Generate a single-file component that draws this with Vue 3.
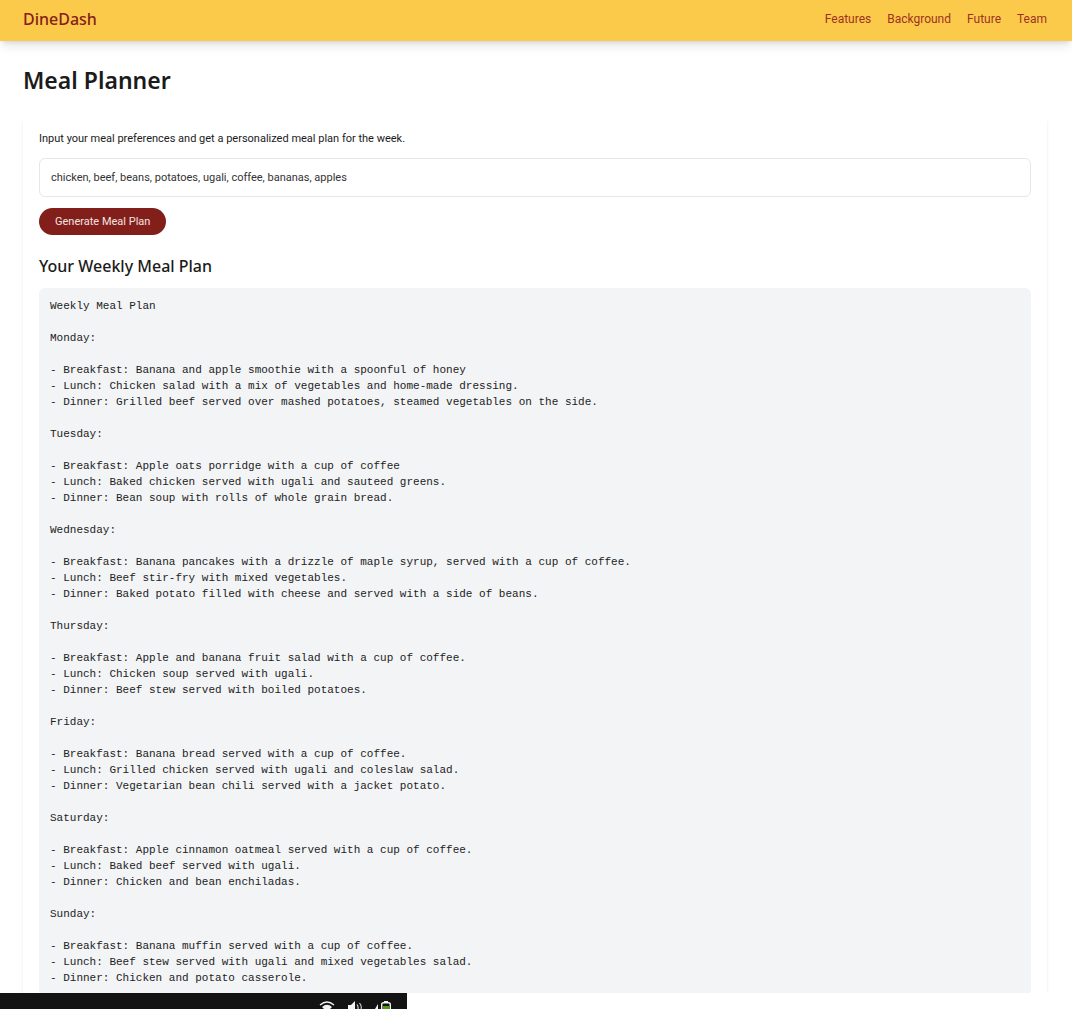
<script setup>
import { ref } from 'vue'

const links = ['Features', 'Background', 'Future', 'Team']
const preferences = ref('chicken, beef, beans, potatoes, ugali, coffee, bananas, apples')

const plan = `Weekly Meal Plan

Monday:

- Breakfast: Banana and apple smoothie with a spoonful of honey
- Lunch: Chicken salad with a mix of vegetables and home-made dressing.
- Dinner: Grilled beef served over mashed potatoes, steamed vegetables on the side.

Tuesday:

- Breakfast: Apple oats porridge with a cup of coffee
- Lunch: Baked chicken served with ugali and sauteed greens.
- Dinner: Bean soup with rolls of whole grain bread.

Wednesday:

- Breakfast: Banana pancakes with a drizzle of maple syrup, served with a cup of coffee.
- Lunch: Beef stir-fry with mixed vegetables.
- Dinner: Baked potato filled with cheese and served with a side of beans.

Thursday:

- Breakfast: Apple and banana fruit salad with a cup of coffee.
- Lunch: Chicken soup served with ugali.
- Dinner: Beef stew served with boiled potatoes.

Friday:

- Breakfast: Banana bread served with a cup of coffee.
- Lunch: Grilled chicken served with ugali and coleslaw salad.
- Dinner: Vegetarian bean chili served with a jacket potato.

Saturday:

- Breakfast: Apple cinnamon oatmeal served with a cup of coffee.
- Lunch: Baked beef served with ugali.
- Dinner: Chicken and bean enchiladas.

Sunday:

- Breakfast: Banana muffin served with a cup of coffee.
- Lunch: Beef stew served with ugali and mixed vegetables salad.
- Dinner: Chicken and potato casserole.
`
</script>

<template>
  <div class="screen">
    <header class="topbar">
      <a class="brand" href="#">DineDash</a>
      <nav class="links">
        <a v-for="link in links" :key="link" :href="'#' + link.toLowerCase()">{{ link }}</a>
      </nav>
    </header>

    <main class="page">
      <h1>Meal Planner</h1>
      <section class="card">
        <label class="hint" for="preferences">Input your meal preferences and get a personalized meal plan for the week.</label>
        <input id="preferences" v-model="preferences" class="field" type="text" />
        <button class="generate" type="button">Generate Meal Plan</button>
        <h2>Your Weekly Meal Plan</h2>
        <pre class="plan">{{ plan }}</pre>
      </section>
    </main>

    <footer class="tray-row">
      <div class="tray">
        <svg width="16" height="8" viewBox="0 0 16 8" aria-hidden="true">
          <path d="M1 4 Q8 -2 15 4" fill="none" stroke="#f2f2f2" stroke-width="1.3" />
          <path d="M3 6 Q8 1.5 13 6 L11 8 H5 Z" fill="#f2f2f2" />
        </svg>
        <svg width="16" height="8" viewBox="0 0 16 8" aria-hidden="true">
          <path d="M1 4 H4 L8 0 V8 H1 Z" fill="#f2f2f2" />
          <path d="M10 3.5 Q11.5 5.5 11 8 M12.5 2 Q15 5 14 8" fill="none" stroke="#dcdcdc" stroke-width="1.1" />
        </svg>
        <svg width="17" height="8" viewBox="0 0 17 8" aria-hidden="true">
          <path d="M3 3 V8 H0 Z" fill="#f2f2f2" />
          <path d="M6.7 8 V3.5 Q6.7 1.7 8.5 1.7 H13.5 Q15.3 1.7 15.3 3.5 V8" fill="none" stroke="#f2f2f2" stroke-width="1.4" />
          <rect x="9" y="0" width="4" height="2" fill="#f2f2f2" />
          <rect x="8" y="5" width="6" height="3" fill="#4e9a06" />
        </svg>
      </div>
    </footer>
  </div>
</template>

<style>
body {
  background: #fff;
}
</style>

<style scoped>
.screen {
  display: flex;
  flex-direction: column;
  height: 100vh;
  overflow: hidden;
  color: #1b1b1b;
  font-family: Roboto, sans-serif;
  font-size: 11px;
  line-height: 16px;
}

.topbar {
  display: flex;
  flex: none;
  align-items: center;
  justify-content: space-between;
  box-sizing: border-box;
  height: 41px;
  padding: 0 25px 3px 23px;
  background: #fcca4b;
  box-shadow: 0 7px 10px -2px rgba(0, 0, 0, 0.1), 0 3px 4px -2px rgba(0, 0, 0, 0.1);
}

.topbar a {
  text-decoration: none;
}

.brand,
h1,
h2 {
  font-family: "Noto Sans", sans-serif;
}

.brand {
  color: #85201b;
  font-size: 16px;
  font-weight: 500;
}

.links {
  display: flex;
  gap: 16px;
  font-size: 12px;
}

.links a {
  color: #9c3320;
}

.page {
  flex: 1;
  min-height: 0;
  overflow: hidden;
  padding: 0 25px 0 23px;
}

h1 {
  margin: 23px 0 20px;
  font-size: 23px;
  font-weight: 600;
  line-height: 32px;
}

.card {
  display: flex;
  flex-direction: column;
  align-items: flex-start;
  padding: 15px 16px 16px;
  border-radius: 5px;
  box-shadow: 0 3px 4px -1px rgba(0, 0, 0, 0.1), 0 1px 3px -1px rgba(0, 0, 0, 0.06);
}

.hint {
  margin-bottom: 11px;
}

.field {
  box-sizing: border-box;
  width: 100%;
  height: 39px;
  padding: 0 11px;
  border: 1px solid #e5e7eb;
  border-radius: 6px;
  background: #fff;
  color: #333;
  font: inherit;
}

.generate {
  height: 27px;
  margin-top: 11px;
  padding: 0 16px;
  border: 0;
  border-radius: 14px;
  background: #821f1a;
  color: #f3e3e1;
  font: inherit;
}

h2 {
  margin: 19px 0 10px;
  font-size: 16px;
  font-weight: 500;
  line-height: 24px;
}

.plan {
  box-sizing: border-box;
  width: 100%;
  margin: 0;
  padding: 10px 11px;
  border-radius: 6px;
  background: #f2f4f6;
  color: #222;
  font-family: "Liberation Mono", monospace;
  white-space: pre-wrap;
}

.tray-row {
  flex: none;
  background: #fff;
}

.tray {
  display: flex;
  align-items: flex-end;
  justify-content: flex-end;
  gap: 12px;
  box-sizing: border-box;
  width: 38%;
  height: 16px;
  padding-right: 15px;
  background: #131313;
}
</style>
